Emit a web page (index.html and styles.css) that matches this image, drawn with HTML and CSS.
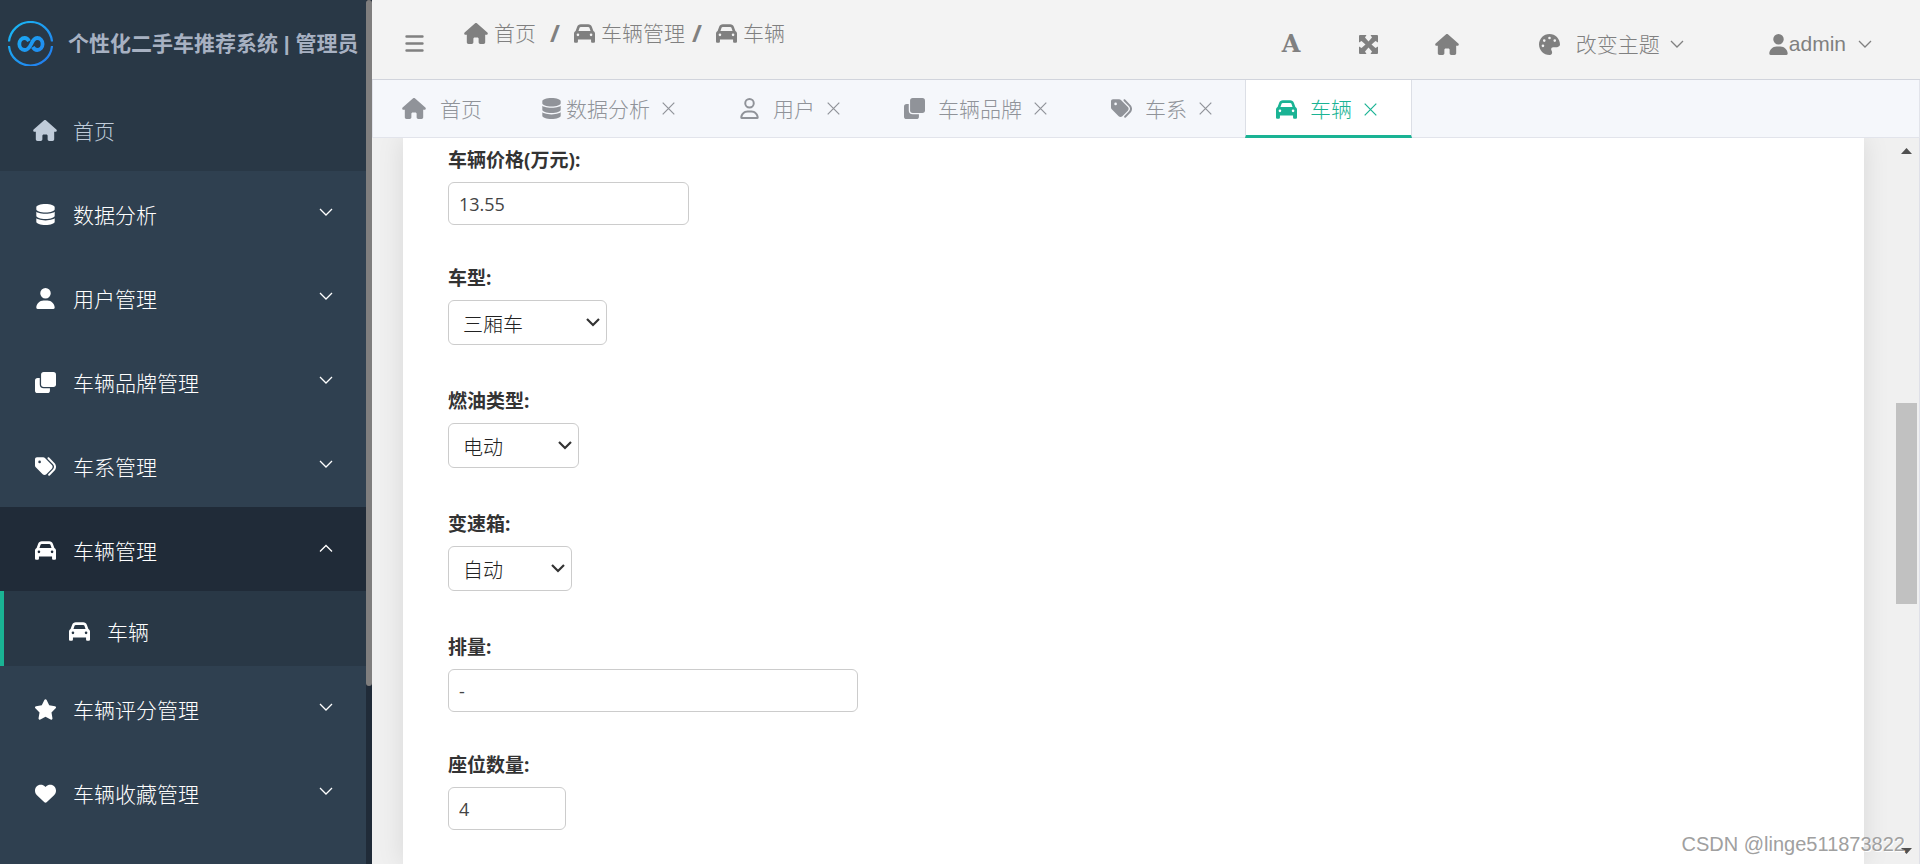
FILE: index.html
```html
<!DOCTYPE html>
<html lang="zh-CN">
<head>
<meta charset="utf-8">
<title>个性化二手车推荐系统 | 管理员</title>
<link rel="stylesheet" href="styles.css">
</head>
<body>
<svg class="sprite" aria-hidden="true">
  <symbol id="i-home" viewBox="0 0 576 512"><path d="M575.8 255.5c0 18-15 32.1-32 32.1h-32l.7 160.2c0 2.7-.2 5.4-.5 8.1V472c0 22.1-17.9 40-40 40H456c-1.1 0-2.2 0-3.3-.1c-1.4 .1-2.8 .1-4.2 .1H416 392c-22.1 0-40-17.9-40-40V448 384c0-17.7-14.3-32-32-32H256c-17.7 0-32 14.3-32 32v64 24c0 22.1-17.9 40-40 40H160 128.1c-1.5 0-3-.1-4.5-.2c-1.2 .1-2.4 .2-3.6 .2H104c-22.1 0-40-17.9-40-40V360c0-.9 0-1.9 .1-2.8V287.6H32c-18 0-32-14-32-32.1c0-9 3-17 10-24L266.4 8c7-7 15-8 22-8s15 2 21 7L564.8 231.5c8 7 12 15 11 24z"/></symbol>
  <symbol id="i-db" viewBox="0 0 448 512"><path d="M448 80v48c0 44.2-100.3 80-224 80S0 172.2 0 128V80C0 35.8 100.3 0 224 0S448 35.8 448 80zM393.2 214.7c20.8-7.4 39.9-16.9 54.8-28.6V288c0 44.2-100.3 80-224 80S0 332.2 0 288V186.1c14.9 11.8 34 21.2 54.8 28.6C99.7 230.7 159.5 240 224 240s124.3-9.3 169.2-25.3zM0 346.1c14.9 11.8 34 21.2 54.8 28.6C99.7 390.7 159.5 400 224 400s124.3-9.3 169.2-25.3c20.8-7.4 39.9-16.9 54.8-28.6V432c0 44.2-100.3 80-224 80S0 476.2 0 432V346.1z"/></symbol>
  <symbol id="i-user" viewBox="0 0 448 512"><path d="M224 256A128 128 0 1 0 224 0a128 128 0 1 0 0 256zm-45.7 48C79.8 304 0 383.8 0 482.3C0 498.7 13.3 512 29.7 512H418.3c16.4 0 29.7-13.3 29.7-29.7C448 383.8 368.2 304 269.7 304H178.3z"/></symbol>
  <symbol id="i-user-line" viewBox="0 0 448 512"><path d="M304 128a80 80 0 1 0 -160 0 80 80 0 1 0 160 0zM96 128a128 128 0 1 1 256 0A128 128 0 1 1 96 128zM49.3 464H398.7c-8.9-63.3-63.3-112-129-112H178.3c-65.7 0-120.1 48.7-129 112zM0 482.3C0 383.8 79.8 304 178.3 304h91.4C368.2 304 448 383.8 448 482.3c0 16.4-13.3 29.7-29.7 29.7H29.7C13.3 512 0 498.7 0 482.3z"/></symbol>
  <symbol id="i-clone" viewBox="0 0 512 512"><rect x="148" width="364" height="364" rx="64"/><path d="M116 148H64a64 64 0 0 0-64 64V448a64 64 0 0 0 64 64H300a64 64 0 0 0 64-64V396H212a96 96 0 0 1-96-96Z"/></symbol>
  <symbol id="i-tags" viewBox="0 0 512 512"><path d="M345 39.1L472.8 168.4c52.4 53 52.4 138.2 0 191.2L360.8 472.9c-9.3 9.4-24.5 9.5-33.9 .2s-9.5-24.5-.2-33.9L438.6 325.9c33.9-34.3 33.9-89.4 0-123.7L310.9 72.9c-9.3-9.4-9.2-24.6 .2-33.9s24.6-9.2 33.9 .2zM0 229.5V80C0 53.5 21.5 32 48 32H197.5c17 0 33.3 6.7 45.3 18.7l168 168c25 25 25 65.5 0 90.5L277.3 442.7c-25 25-65.5 25-90.5 0l-168-168C6.7 262.7 0 246.5 0 229.5zM144 144a32 32 0 1 0 -64 0 32 32 0 1 0 64 0z"/></symbol>
  <symbol id="i-car" viewBox="0 0 512 512"><path d="M135.2 117.4L109.1 192H402.9l-26.1-74.6C372.3 104.6 360.2 96 346.6 96H165.4c-13.6 0-25.7 8.6-30.2 21.4zM39.6 196.8L74.8 96.3C88.3 57.8 124.6 32 165.4 32H346.6c40.8 0 77.1 25.8 90.6 64.3l35.2 100.5c23.2 9.6 39.6 32.5 39.6 59.2V400v48c0 17.7-14.3 32-32 32H448c-17.7 0-32-14.3-32-32V400H96v48c0 17.7-14.3 32-32 32H32c-17.7 0-32-14.3-32-32V400 256c0-26.7 16.4-49.6 39.6-59.2zM128 288a32 32 0 1 0 -64 0 32 32 0 1 0 64 0zm288 32a32 32 0 1 0 0-64 32 32 0 1 0 0 64z"/></symbol>
  <symbol id="i-star" viewBox="24 0 528 512"><path d="M316.9 18C311.6 7 300.4 0 288.1 0s-23.4 7-28.8 18L195 150.3 51.4 171.5c-12 1.8-22 10.2-25.7 21.7s-.7 24.2 7.9 32.7L137.8 329 113.2 474.7c-2 12 3 24.2 12.9 31.3s23 8 33.8 2.3l128.3-68.5 128.3 68.5c10.8 5.7 23.9 4.9 33.8-2.3s14.9-19.3 12.9-31.3L438.5 329 542.7 225.9c8.6-8.5 11.7-21.2 7.9-32.7s-13.7-19.9-25.7-21.7L381.2 150.3 316.9 18z"/></symbol>
  <symbol id="i-heart" viewBox="0 0 512 512"><path d="M47.6 300.4L228.3 469.1c7.5 7 17.4 10.9 27.7 10.9s20.2-3.9 27.7-10.9L464.4 300.4c30.4-28.3 47.6-68 47.6-109.5v-5.8c0-69.9-50.5-129.5-119.4-141C347 36.5 300.6 51.4 268 84L256 96 244 84c-32.6-32.6-79-47.5-124.6-39.9C50.5 55.6 0 115.2 0 185.1v5.8c0 41.5 17.2 81.2 47.6 109.5z"/></symbol>
  <symbol id="i-palette" viewBox="0 0 512 512"><path d="M512 256c0 .9 0 1.8 0 2.7c-.4 36.5-33.6 61.3-70.1 61.3H344c-26.5 0-48 21.5-48 48c0 3.4 .4 6.7 1 9.9c2.1 10.2 6.5 20 10.8 29.9c6.1 13.8 12.1 27.5 12.1 42c0 31.8-21.6 60.7-53.4 62c-3.5 .1-7 .2-10.6 .2C114.6 512 0 397.4 0 256S114.6 0 256 0S512 114.6 512 256zM128 288a32 32 0 1 0 -64 0 32 32 0 1 0 64 0zm0-96a32 32 0 1 0 0-64 32 32 0 1 0 0 64zM288 96a32 32 0 1 0 -64 0 32 32 0 1 0 64 0zm96 96a32 32 0 1 0 0-64 32 32 0 1 0 0 64z"/></symbol>
  <symbol id="i-expand" viewBox="0 0 19 19"><path d="M1 0H7.500L6 2.500 9.500 6.500 13 2.500 11.500 0H18Q19 0 19 1V7.500L16.500 6 12.500 9.500 16.500 13 19 11.500V18Q19 19 18 19H11.500L13 16.500 9.500 12.500 6 16.500 7.500 19H1Q0 19 0 18V11.500L2.500 13 6.500 9.500 2.500 6 0 7.500V1Q0 0 1 0Z"/></symbol>
  <symbol id="i-bars" viewBox="0 0 19 17"><path d="M1.500 1.500h16M1.500 8.500h16M1.500 15.500h16" fill="none" stroke="currentColor" stroke-width="2.400" stroke-linecap="round"/></symbol>
  <symbol id="i-down" viewBox="0 0 14 9"><path d="M1 1l6 6 6-6" fill="none" stroke="currentColor" stroke-width="1.300"/></symbol>
  <symbol id="i-down-bold" viewBox="0 0 14 9"><path d="M1 1l6 6 6-6" fill="none" stroke="currentColor" stroke-width="2.200"/></symbol>
  <symbol id="i-up" viewBox="0 0 14 9"><path d="M1 7.500l6-6 6 6" fill="none" stroke="currentColor" stroke-width="1.300"/></symbol>
  <symbol id="i-x" viewBox="0 0 13 13"><path d="M.7 .7l11.600 11.600M12.300 .7L.7 12.300" fill="none" stroke="currentColor" stroke-width="1.200"/></symbol>
  <symbol id="i-arrow" viewBox="0 0 11 6"><path d="M5.500 0L11 6H0Z"/></symbol>
</svg>
<div class="app">
  <aside class="sidebar">
    <div class="side-body">
      <div class="brand">
        <svg class="logo" viewBox="0 0 45 45" fill="none" stroke="url(#lg)">
          <defs><linearGradient id="lg" gradientUnits="userSpaceOnUse" x1="0" y1="0" x2="45" y2="45"><stop offset="0" stop-color="#18bdf5"/><stop offset="1" stop-color="#2377ee"/></linearGradient></defs>
          <path d="M1 20.500A21.600 21.600 0 0 1 44 20.500M1 25A21.600 21.600 0 0 0 44 25" stroke-width="2.200"/>
          <path d="M21 20.200C19.800 18 18.500 17 16.700 17A5.400 6 0 0 0 16.700 29C19.800 29 21.500 26.500 23 23.500C24.500 20 26.200 17 29.200 17A5.400 6 0 0 1 29.200 29C27.300 29 26 28 24.900 26" stroke-width="3.800"/>
        </svg>
        <h1 class="brand-title">个性化二手车推荐系统 | 管理员</h1>
      </div>
      <nav class="menu">
        <a class="item home" href="#"><svg class="ico wide"><use href="#i-home"/></svg><span class="txt">首页</span></a>
        <a class="item" href="#"><svg class="ico"><use href="#i-db"/></svg><span class="txt">数据分析</span><svg class="chev"><use href="#i-down"/></svg></a>
        <a class="item" href="#"><svg class="ico"><use href="#i-user"/></svg><span class="txt">用户管理</span><svg class="chev"><use href="#i-down"/></svg></a>
        <a class="item" href="#"><svg class="ico"><use href="#i-clone"/></svg><span class="txt">车辆品牌管理</span><svg class="chev"><use href="#i-down"/></svg></a>
        <a class="item" href="#"><svg class="ico"><use href="#i-tags"/></svg><span class="txt">车系管理</span><svg class="chev"><use href="#i-down"/></svg></a>
        <a class="item open" href="#"><svg class="ico"><use href="#i-car"/></svg><span class="txt">车辆管理</span><svg class="chev"><use href="#i-up"/></svg></a>
        <a class="item sub" href="#"><svg class="ico"><use href="#i-car"/></svg><span class="txt">车辆</span></a>
        <a class="item" href="#"><svg class="ico"><use href="#i-star"/></svg><span class="txt">车辆评分管理</span><svg class="chev"><use href="#i-down"/></svg></a>
        <a class="item" href="#"><svg class="ico"><use href="#i-heart"/></svg><span class="txt">车辆收藏管理</span><svg class="chev"><use href="#i-down"/></svg></a>
      </nav>
    </div>
    <div class="side-scroll"><div class="side-thumb"></div></div>
  </aside>
  <div class="main">
    <header class="topbar">
      <button class="icon-btn toggle" type="button" aria-label="菜单"><svg class="bars"><use href="#i-bars"/></svg></button>
      <nav class="crumbs">
        <a href="#"><svg class="ico wide"><use href="#i-home"/></svg>首页</a>
        <b class="sep first">/</b>
        <a href="#"><svg class="ico"><use href="#i-car"/></svg>车辆管理</a>
        <b class="sep">/</b>
        <a href="#"><svg class="ico"><use href="#i-car"/></svg>车辆</a>
      </nav>
      <div class="tools">
        <button class="icon-btn letter" type="button" aria-label="字体">A</button>
        <button class="icon-btn expand" type="button" aria-label="全屏"><svg><use href="#i-expand"/></svg></button>
        <button class="icon-btn go-home" type="button" aria-label="主页"><svg class="ico wide"><use href="#i-home"/></svg></button>
        <button class="icon-btn theme" type="button"><svg class="ico"><use href="#i-palette"/></svg>改变主题<svg class="chev"><use href="#i-down"/></svg></button>
        <button class="icon-btn account" type="button"><svg class="ico"><use href="#i-user"/></svg>admin<svg class="chev"><use href="#i-down"/></svg></button>
      </div>
    </header>
    <nav class="tabs">
      <a class="tab first" href="#"><svg class="ico wide"><use href="#i-home"/></svg>首页</a>
      <a class="tab tight" href="#"><svg class="ico"><use href="#i-db"/></svg>数据分析<svg class="x"><use href="#i-x"/></svg></a>
      <a class="tab" href="#"><svg class="ico"><use href="#i-user-line"/></svg>用户<svg class="x"><use href="#i-x"/></svg></a>
      <a class="tab" href="#"><svg class="ico"><use href="#i-clone"/></svg>车辆品牌<svg class="x"><use href="#i-x"/></svg></a>
      <a class="tab" href="#"><svg class="ico"><use href="#i-tags"/></svg>车系<svg class="x"><use href="#i-x"/></svg></a>
      <a class="tab active" href="#"><svg class="ico"><use href="#i-car"/></svg>车辆<svg class="x"><use href="#i-x"/></svg></a>
    </nav>
    <div class="view">
      <form class="card">
        <div class="group"><label for="price">车辆价格(万元):</label><input class="field price" id="price" value="13.55"></div>
        <div class="group"><label for="type">车型:</label><span class="pick type"><select id="type"><option>三厢车</option></select><svg><use href="#i-down-bold"/></svg></span></div>
        <div class="group"><label for="fuel">燃油类型:</label><span class="pick fuel"><select id="fuel"><option>电动</option></select><svg><use href="#i-down-bold"/></svg></span></div>
        <div class="group"><label for="gear">变速箱:</label><span class="pick gear"><select id="gear"><option>自动</option></select><svg><use href="#i-down-bold"/></svg></span></div>
        <div class="group"><label for="cc">排量:</label><input class="field cc" id="cc" value="-"></div>
        <div class="group"><label for="seats">座位数量:</label><input class="field seats" id="seats" value="4"></div>
      </form>
      <div class="scroll">
        <svg class="arrow"><use href="#i-arrow"/></svg>
        <div class="track"><div class="thumb"></div></div>
        <svg class="arrow down"><use href="#i-arrow"/></svg>
      </div>
    </div>
  </div>
</div>
<div class="watermark">CSDN @linge511873822</div>
</body>
</html>
```
FILE: styles.css
```css
* { box-sizing: border-box; }
body {
  margin: 0;
  font: 300 21px/30px "Open Sans", "Noto Sans CJK SC", sans-serif;
  color: #808080;
  background: #f0f0f0;
  overflow: hidden;
}
a { color: inherit; text-decoration: none; }
svg { fill: currentColor; flex: none; display: block; }
.sprite { position: absolute; width: 0; height: 0; }
.ico { width: 21px; height: 21px; }
.ico.wide { width: 24px; height: 21px; }
.chev { width: 14px; height: 9px; }

.app { display: flex; height: 100vh; overflow: hidden; }

/* sidebar */
.sidebar { flex: none; display: flex; width: 372px; background: #2f4050; }
.side-body { flex: 1; overflow: hidden; }
.side-scroll { width: 6px; background: #202b38; }
.side-thumb { height: 686px; border-radius: 3px; background: #7f7e7e; }
.brand { display: flex; align-items: center; gap: 15px; height: 87px; padding-left: 8px; background: #293846; }
.logo { width: 45px; height: 45px; fill: none; }
.brand-title { margin: 0; font-family: "Liberation Sans", "Noto Sans CJK SC", sans-serif; font-size: 21px; font-weight: 700; color: #a7b1c2; white-space: nowrap; }
.item { display: flex; align-items: center; height: 84px; padding: 3px 33px 0 35px; color: #fff; }
.item .txt { margin-left: 17px; }
.item .wide { margin: 0 -1px 0 -2px; }
.item .chev { margin: 0 0 4px auto; }
.item.home { background: #293846; color: #bfcbd9; }
.item.open { background: #202b38; }
.item.sub { height: 75px; padding-top: 6px; padding-left: 65px; background: #293846; border-left: 4px solid #1ab394; }

/* top bar */
.main { flex: 1; min-width: 0; display: flex; flex-direction: column; }
.topbar { flex: none; display: flex; height: 80px; padding: 0 48px 0 33px; background: #f3f3f3; border-bottom: 1px solid #d1d4dc; }
.icon-btn { display: flex; align-items: center; margin: 0; padding: 9px 0 0; border: 0; background: none; color: inherit; font: inherit; }
.toggle { padding-top: 7px; }
.bars { width: 19px; height: 17px; }
.crumbs { display: flex; align-items: center; height: 66px; margin-left: 40px; }
.crumbs a { display: flex; align-items: center; gap: 6px; }
.sep { width: 31px; padding-left: 7px; font-size: 24px; font-weight: 700; }
.sep.first { width: 38px; padding-left: 14px; }
.tools { display: flex; margin-left: auto; }
.letter { font: 700 24px/30px "DejaVu Serif", serif; width: 18px; }
.expand { margin-left: 59px; }
.expand svg { width: 19px; height: 19px; }
.go-home { margin-left: 57px; }
.theme { margin-left: 80px; }
.theme .ico { margin-right: 16px; }
.theme .chev { margin-left: 10px; }
.account { margin-left: 84px; font-family: "Liberation Sans", sans-serif; font-weight: 400; }
.account .chev { margin-left: 12px; }

/* tabs */
.tabs { flex: none; display: flex; height: 58px; background: #f5f7fb; border: 1px solid #e2e4eb; border-top: 0; }
.tab { display: flex; align-items: center; padding: 0 33px 0 31px; color: #909399; }
.tab.first { gap: 14px; padding: 0 28px 0 29px; }
.tab .x { width: 13px; height: 13px; margin-left: 12px; }
.tab:not(.first):not(.tight) .ico { margin-right: 13px; }
.tab.tight .ico { margin-right: 4px; }
.tab.active { height: 58px; padding: 3px 34px 0 30px; color: #1ab394; background: #fff; border: solid #dcdfe6; border-width: 0 1px; border-bottom: 3px solid #1ab394; }

/* content */
.view { flex: 1; min-height: 0; display: flex; overflow: hidden; padding-left: 31px; border-right: 1px solid #dfe0e8; background: #f0f0f0; }
.card { flex: 1; padding: 8px 45px 39px; background: #fff; box-shadow: 0 0 25px rgba(0, 0, 0, .1); color: #333; }
.group { margin-bottom: 39px; }
.group label { display: block; margin-bottom: 8px; font-size: 19px; line-height: 28px; font-weight: 700; }
.field { display: block; height: 43px; padding: 0 10px; border: 1px solid #ccc; border-radius: 6px; background: #fff; color: #444; font: inherit; font-size: 18px; font-weight: 400; }
.price { width: 241px; }
.cc { width: 410px; }
.seats { width: 118px; }
.pick { position: relative; display: block; margin-bottom: 42px; }
.pick select { appearance: none; width: 100%; height: 45px; padding: 4px 14px 0; border: 1px solid #ccc; border-radius: 6px; background: #fff; color: #222; font: inherit; font-size: 20px; }
.pick svg { position: absolute; right: 7px; top: 18px; width: 14px; height: 9px; pointer-events: none; }
.type { width: 159px; }
.fuel { width: 131px; }
.gear { width: 124px; }
.scroll { display: flex; flex-direction: column; align-items: center; width: 23px; margin: 10px 1px 10px 31px; color: #505050; }
.arrow { width: 11px; height: 6px; }
.arrow.down { transform: rotate(180deg); }
.track { flex: 1; width: 21px; padding-top: 249px; }
.thumb { height: 201px; background: #c1c1c1; }
.watermark { position: absolute; right: 15px; bottom: 5px; font: 400 20px/30px "Liberation Sans", sans-serif; color: #a0a0a0; text-shadow: 1px 1px 0 #fff; }
```
